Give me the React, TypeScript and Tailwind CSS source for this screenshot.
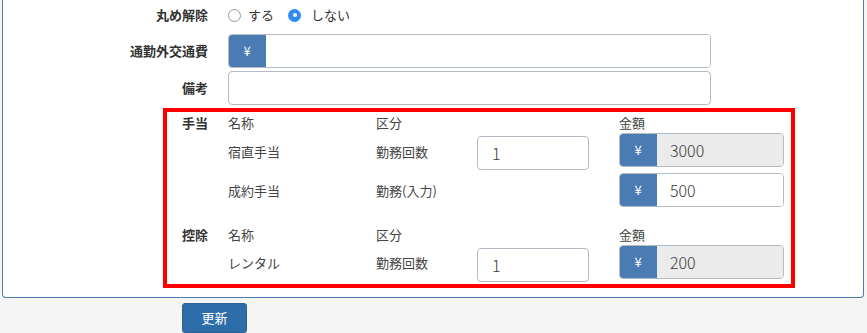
import React from 'react'

const font = { fontFamily: '"Noto Sans CJK JP", "Noto Sans", sans-serif' }

const Yen = ({ value, disabled }: { value?: string; disabled?: boolean }) => (
  <div className="flex h-[34px] w-[165px] rounded-[4px] border border-[#b3bac4] overflow-hidden">
    <div className="w-[38px] -my-px -ml-px flex items-center justify-center bg-[#4a7bb3] text-white text-[13px]">¥</div>
    <div
      className={`flex-1 flex items-center pl-[13px] text-[16px] font-light text-[#3a3a3a] ${disabled ? 'bg-[#ebebeb]' : 'bg-white'}`}
    >
      {value}
    </div>
  </div>
)

const CountInput = ({ value }: { value: string }) => (
  <div className="h-[34px] w-[112px] rounded-[4px] border border-[#b3bac4] bg-white flex items-center pl-[14px] text-[16px] font-light text-[#3a3a3a]">
    {value}
  </div>
)

const SectionHeader = ({ title }: { title: string }) => (
  <div className="flex h-[20px] items-center text-[13px] text-[#444]">
    <div className="w-[46px] font-bold text-[#333]">{title}</div>
    <div className="w-[148px]">名称</div>
    <div className="w-[101px]">区分</div>
    <div className="w-[142px]" />
    <div>金額</div>
  </div>
)

const ItemRow = ({
  name,
  kind,
  count,
  amount,
  disabled,
  textTop
}: {
  name: string
  kind: string
  count?: string
  amount: string
  disabled?: boolean
  textTop: string
}) => (
  <div className="flex items-start text-[13px] text-[#444]">
    <div className="w-[46px]" />
    <div className={`w-[148px] leading-[20px] ${textTop}`}>{name}</div>
    <div className={`w-[101px] leading-[20px] ${textTop}`}>{kind}</div>
    <div className="w-[142px]">{count ? <div className="mt-[3px]"><CountInput value={count} /></div> : null}</div>
    <Yen value={amount} disabled={disabled} />
  </div>
)

export default function App() {
  return (
    <div className="h-[333px] w-[867px] bg-[#f5f5f5] overflow-hidden text-[#333]" style={font}>
      <div className="ml-[2px] w-[862px] border-x border-b border-[#4a7bb3] rounded-b-[4px] bg-white pb-[9px]">
        <div className="flex h-[30px] items-center text-[13px]">
          <div className="w-[205px] text-right font-bold">丸め解除</div>
          <div className="ml-[20px] flex items-center">
            <span className="h-[13px] w-[13px] rounded-full border border-[#9a9a9a] bg-white" />
            <span className="ml-[7px]">する</span>
            <span className="ml-[14px] h-[13px] w-[13px] rounded-full bg-[#2f8af5] flex items-center justify-center">
              <span className="h-[4px] w-[4px] rounded-full bg-white" />
            </span>
            <span className="ml-[10px]">しない</span>
          </div>
        </div>
        <div className="mt-[4px] flex items-center text-[13px]">
          <div className="w-[205px] text-right font-bold">通勤外交通費</div>
          <div className="ml-[20px] flex h-[34px] w-[483px] rounded-[4px] border border-[#b3bac4] overflow-hidden">
            <div className="w-[38px] -my-px -ml-px flex items-center justify-center bg-[#4a7bb3] text-white text-[13px]">¥</div>
            <div className="flex-1 bg-white" />
          </div>
        </div>
        <div className="mt-[3px] flex items-center text-[13px]">
          <div className="w-[205px] text-right font-bold">備考</div>
          <div className="ml-[20px] h-[34px] w-[483px] rounded-[4px] border border-[#b3bac4] bg-white" />
        </div>
        <div className="ml-[160px] mt-[3px] w-[632px] border-[4px] border-[#ff0000] pl-[15px] pt-[1px] pb-[2px]">
          <SectionHeader title="手当" />
          <ItemRow name="宿直手当" kind="勤務回数" count="1" amount="3000" disabled textTop="mt-[9px]" />
          <div className="mt-[3px]">
            <ItemRow name="成約手当" kind="勤務(入力)" amount="500" textTop="mt-[8px]" />
          </div>
          <div className="mt-[18px]">
            <SectionHeader title="控除" />
          </div>
          <ItemRow name="レンタル" kind="勤務回数" count="1" amount="200" disabled textTop="mt-[8px]" />
        </div>
      </div>
      <button className="ml-[182px] mt-[5px] h-[30px] w-[65px] rounded-[3px] border border-[#2a6296] bg-[#2d6da9] text-[13px] text-white" style={font}>
        更新
      </button>
    </div>
  )
}
